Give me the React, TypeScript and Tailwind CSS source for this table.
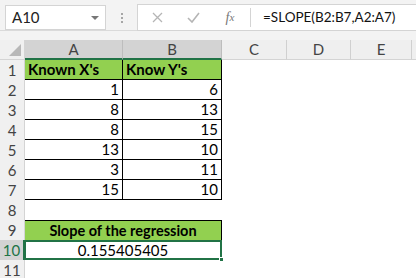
import React from 'react';

// Excel-like sheet: formula bar, headers and the SLOPE example block
const FONT = { fontFamily: 'Lato, "Open Sans", sans-serif' };

const colHeads = [
  { key: 'A', w: 'w-[98px]', sel: true },
  { key: 'B', w: 'w-[99px]', sel: true },
  { key: 'C', w: 'w-[65px]', sel: false },
  { key: 'D', w: 'w-[64px]', sel: false },
  { key: 'E', w: 'w-[61px]', sel: false },
];

const data: [number, number][] = [
  [1, 6],
  [8, 13],
  [8, 15],
  [13, 10],
  [3, 11],
  [15, 10],
];

function RowHead({ n, active = false }: { n: number; active?: boolean }) {
  return (
    <div
      className={`w-[25px] h-[20px] shrink-0 flex items-center justify-center text-[15px] ${
        active
          ? 'bg-[#d3d3d3] text-[#217346] border-r-2 border-[#217346]'
          : 'bg-[#f0f0f0] text-[#444] border-r border-[#d4d4d4]'
      }`}
    >
      {n}
    </div>
  );
}

export default function App() {
  return (
    <div className="w-[416px] h-[278px] overflow-hidden bg-white" style={FONT}>
      {/* formula bar */}
      <div className="h-[40px] bg-[#f3f3f3]">
        <div className="flex items-start pt-[5px] pl-[5px] h-[31px] border-b border-[#dadada]">
          <div className="w-[101px] h-[25px] bg-white border border-[#d4d4d4] flex items-center justify-between pl-[6px] pr-[6px] text-[15px] text-[#222]">
            <span>A10</span>
            <span className="w-0 h-0 border-l-[4px] border-r-[4px] border-t-[4px] border-l-transparent border-r-transparent border-t-[#777]" />
          </div>
          <div className="w-[31px] h-[25px] flex flex-col items-center justify-center gap-[2px]">
            <span className="w-[2px] h-[2px] bg-[#a6a6a6]" />
            <span className="w-[2px] h-[2px] bg-[#a6a6a6]" />
            <span className="w-[2px] h-[2px] bg-[#a6a6a6]" />
          </div>
          <div className="flex-1 -mt-[1px] h-[27px] bg-white border border-[#d4d4d4] border-r-0 flex items-center">
            <div className="w-[38px] flex justify-center">
              <svg width="11" height="11" viewBox="0 0 11 11">
                <path d="M1 1 L10 10 M10 1 L1 10" stroke="#b5b5b5" strokeWidth="1.3" />
              </svg>
            </div>
            <div className="w-[34px] flex justify-center">
              <svg width="13" height="11" viewBox="0 0 13 11">
                <path d="M1 6 L5 10 L12 1" stroke="#b5b5b5" strokeWidth="1.6" fill="none" />
              </svg>
            </div>
            <div
              className="w-[40px] flex justify-center text-[#777] italic text-[14px]"
              style={{ fontFamily: '"Liberation Serif", serif' }}
            >
              f<span className="text-[11px] relative top-[2px]">x</span>
            </div>
            <div className="w-px h-[19px] bg-[#d4d4d4]" />
            <div className="pl-[12px] text-[13.5px] text-[#111]">=SLOPE(B2:B7,A2:A7)</div>
          </div>
        </div>
      </div>

      {/* column headers */}
      <div className="flex h-[20px]">
        <div className="w-[25px] shrink-0 bg-[#f0f0f0] border-r border-b border-[#d4d4d4] relative">
          <svg className="absolute right-[3px] bottom-[3px]" width="12" height="12" viewBox="0 0 12 12">
            <path d="M12 0 L12 12 L0 12 Z" fill="#b8b8b8" />
          </svg>
        </div>
        {colHeads.map((c) => (
          <div
            key={c.key}
            className={`${c.w} shrink-0 flex items-center justify-center text-[15px] text-[#444] border-r ${
              c.sel
                ? 'bg-[#d3d3d3] border-r-[#bdbdbd] border-b-2 border-b-[#217346]'
                : 'bg-[#efefef] border-r-[#d0d0d0] border-b border-b-[#d4d4d4]'
            }`}
          >
            {c.key}
          </div>
        ))}
        <div className="flex-1 bg-[#efefef] border-b border-[#d4d4d4]" />
      </div>

      {/* row 1: headings */}
      <div className="flex h-[20px]">
        <RowHead n={1} />
        <div className="w-[98px] shrink-0 bg-[#92d050] border-r border-b border-black pl-[3px] flex items-center text-[15px] font-bold text-black">
          Known X's
        </div>
        <div className="w-[99px] shrink-0 bg-[#92d050] border-r border-b border-black pl-[3px] flex items-center text-[15px] font-bold text-black">
          Know Y's
        </div>
      </div>

      {/* rows 2-7: values */}
      {data.map(([x, y], i) => (
        <div key={i} className="flex h-[20px]">
          <RowHead n={i + 2} />
          <div className="w-[98px] shrink-0 border-r border-b border-black pr-[3px] flex items-center justify-end text-[15px] text-black">
            {x}
          </div>
          <div className="w-[99px] shrink-0 border-r border-b border-black pr-[3px] flex items-center justify-end text-[15px] text-black">
            {y}
          </div>
        </div>
      ))}

      {/* row 8: empty */}
      <div className="flex h-[20px]">
        <RowHead n={8} />
      </div>

      {/* row 9: merged title */}
      <div className="flex h-[20px]">
        <RowHead n={9} />
        <div className="w-[197px] shrink-0 bg-[#92d050] border-r border-t border-black flex items-center justify-center text-[14.5px] font-bold text-black">
          Slope of the regression
        </div>
      </div>

      {/* row 10: merged result, selected */}
      <div className="flex h-[20px]">
        <RowHead n={10} active />
        <div className="w-[198px] shrink-0 -ml-[1px] border-2 border-[#217346] flex items-center justify-center text-[15px] text-black relative">
          0.155405405
          <span className="absolute -right-[4px] -bottom-[4px] w-[5px] h-[5px] bg-[#217346] border border-white" />
        </div>
      </div>

      {/* row 11 */}
      <div className="flex h-[20px]">
        <RowHead n={11} />
      </div>
    </div>
  );
}
